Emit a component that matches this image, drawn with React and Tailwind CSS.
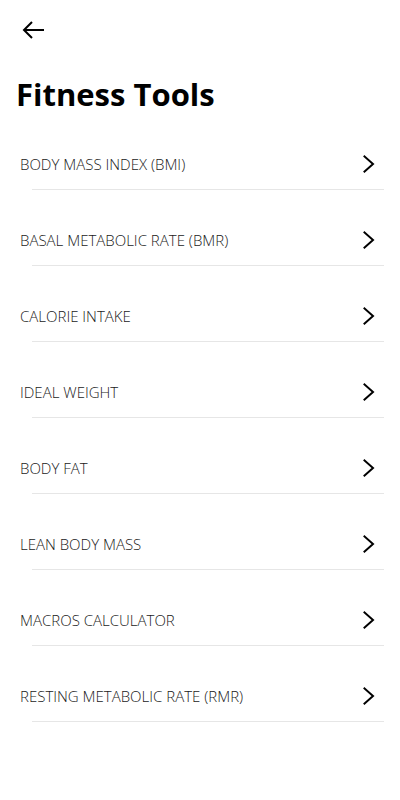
import React from "react";

const items = [
  "BODY MASS INDEX (BMI)",
  "BASAL METABOLIC RATE (BMR)",
  "CALORIE INTAKE",
  "IDEAL WEIGHT",
  "BODY FAT",
  "LEAN BODY MASS",
  "MACROS CALCULATOR",
  "RESTING METABOLIC RATE (RMR)",
];

function Chevron() {
  return (
    <svg width="12" height="18" viewBox="0 0 12 18" fill="none" className="shrink-0">
      <polyline points="1.5,1.5 10,9 1.5,16.5" stroke="#000" strokeWidth="2" strokeLinecap="square" />
    </svg>
  );
}

export default function App() {
  return (
    <div className="w-[400px] min-h-[800px] bg-white" style={{ fontFamily: '"Open Sans", sans-serif' }}>
      <div className="h-[60px] flex items-center pl-[22px]">
        <svg width="24" height="20" viewBox="0 0 24 20" fill="none">
          <path d="M2 10H22" stroke="#000" strokeWidth="2" />
          <path d="M10 2L2 10L10 18" stroke="#000" strokeWidth="2" />
        </svg>
      </div>
      <h1 className="mt-[16px] pl-[16px] text-[31px] leading-[36px] font-bold text-black">Fitness Tools</h1>
      <div className="mt-[2px]">
        {items.map((t) => (
          <div key={t}>
            <div className="flex items-center justify-between pt-[40px] pb-[15px] pl-[20px] pr-[25px]">
              <span className="text-[15px] leading-[20px] font-light text-[#1a1a1a]">{t}</span>
              <Chevron />
            </div>
            <div className="ml-[32px] mr-[16px] h-px bg-[#e6e6e6]" />
          </div>
        ))}
      </div>
    </div>
  );
}
